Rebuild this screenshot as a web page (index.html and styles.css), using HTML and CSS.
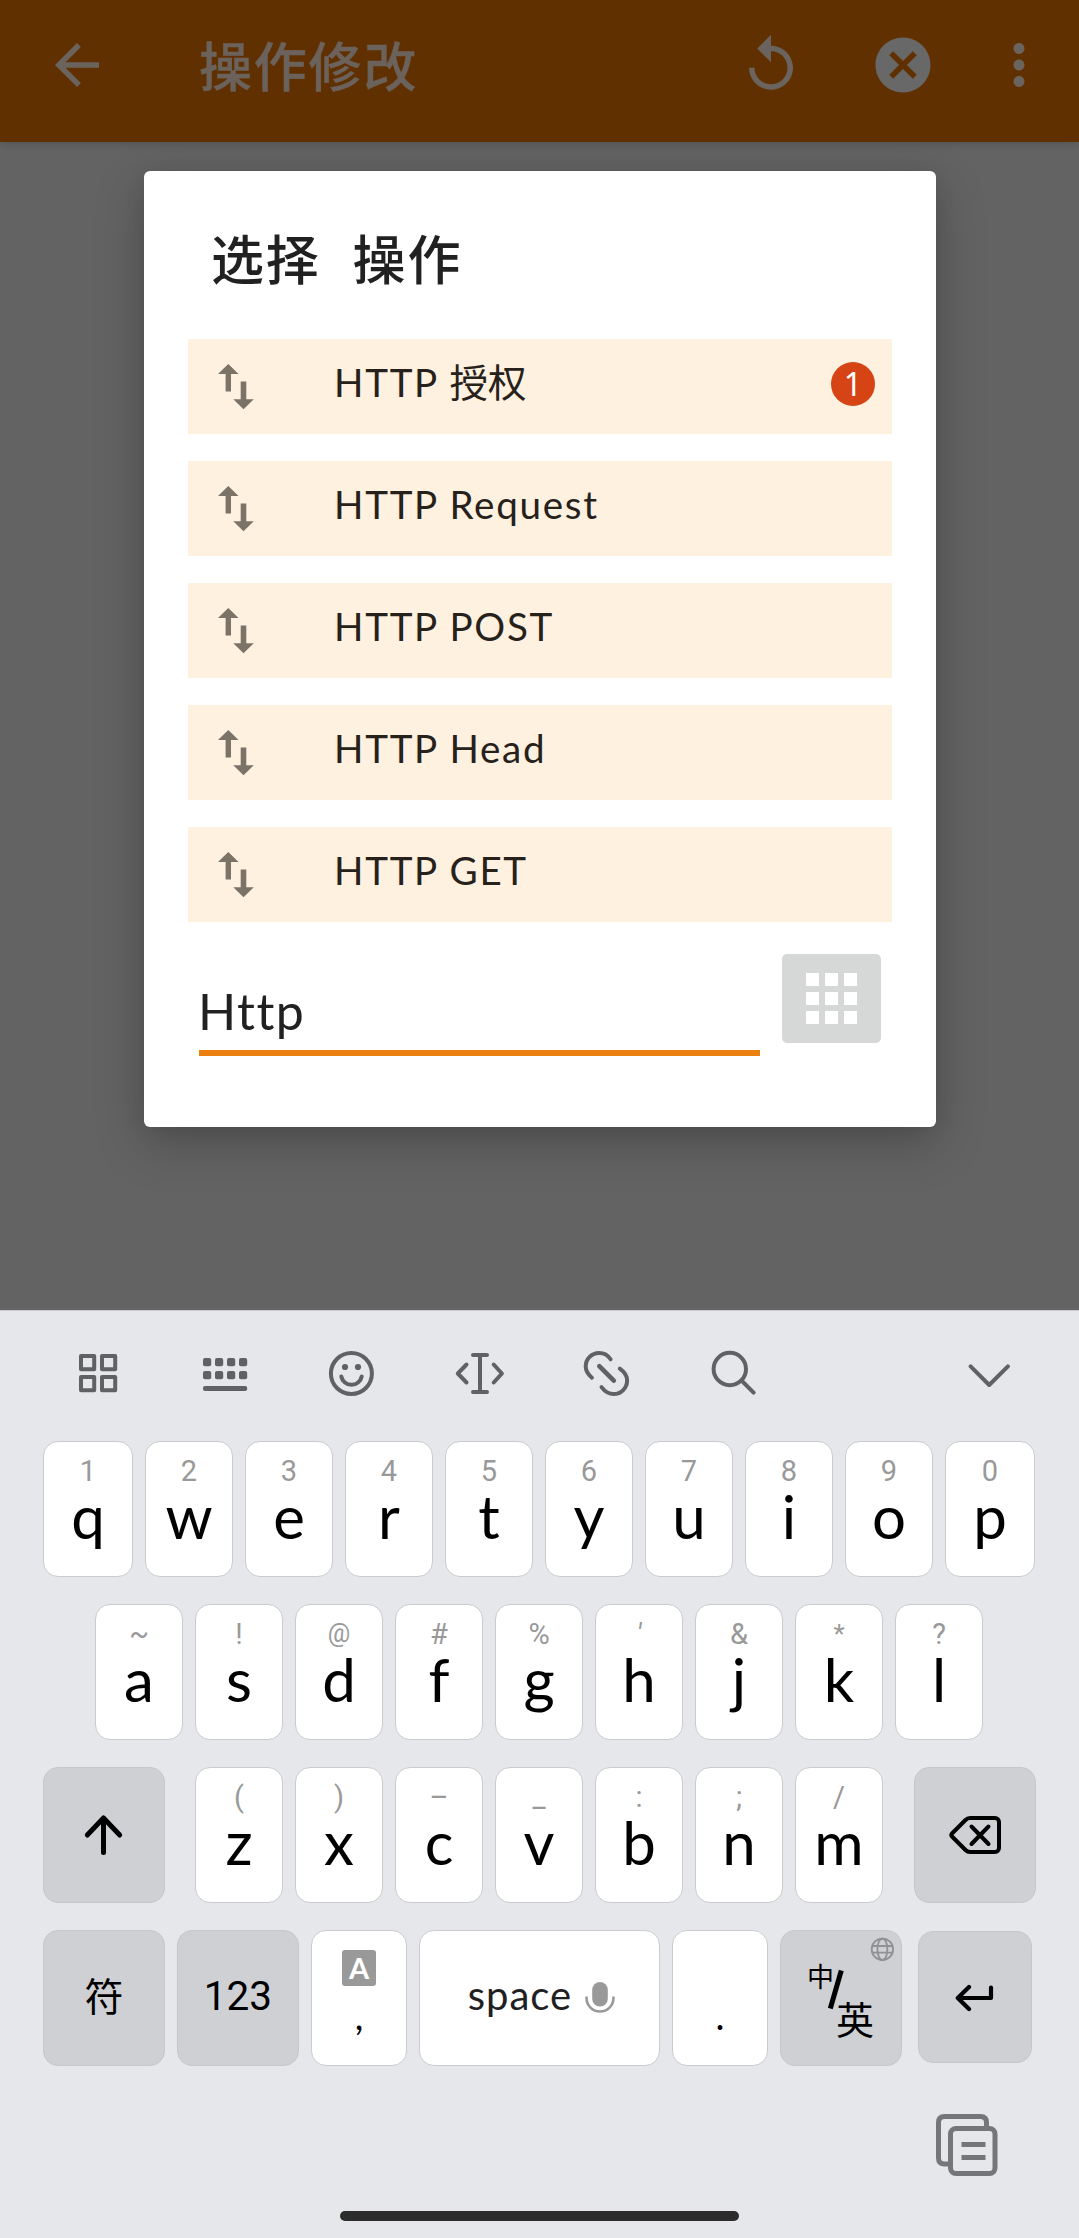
FILE: index.html
```html
<!DOCTYPE html>
<html lang="zh-CN">
<head>
<meta charset="utf-8">
<title>操作修改</title>
<link rel="stylesheet" href="styles.css">
</head>
<body>
<svg class="defs" width="0" height="0">
  <symbol id="updown" viewBox="0 0 36 46"><path d="M10.3 0 20.5 10H13v17.6H7.6V10H0zM22.7 17.6h5.6v17.7h7.5l-10.3 10-10.2-10h7.4z"/></symbol>
</svg>
<header class="appbar">
  <svg class="icon back" viewBox="0 0 24 24"><path d="M20 11H7.83l5.59-5.59L12 4l-8 8 8 8 1.41-1.41L7.83 13H20v-2z"/></svg>
  <h1 class="appbar-title">操作修改</h1>
  <svg class="icon replay" viewBox="0 0 24 24"><path d="M12 5V1L7 6l5 5V7c3.31 0 6 2.69 6 6s-2.69 6-6 6-6-2.69-6-6H4c0 4.42 3.58 8 8 8s8-3.58 8-8-3.58-8-8-8z"/></svg>
  <svg class="icon cancel" viewBox="0 0 24 24"><path d="M12 2C6.47 2 2 6.47 2 12s4.47 10 10 10 10-4.47 10-10S17.53 2 12 2zm5 13.59L15.59 17 12 13.41 8.41 17 7 15.59 10.59 12 7 8.41 8.41 7 12 10.59 15.59 7 17 8.41 13.41 12 17 15.59z"/></svg>
  <svg class="icon more" viewBox="0 0 24 24"><path d="M12 8c1.1 0 2-.9 2-2s-.9-2-2-2-2 .9-2 2 .9 2 2 2zm0 2c-1.1 0-2 .9-2 2s.9 2 2 2 2-.9 2-2-.9-2-2-2zm0 6c-1.1 0-2 .9-2 2s.9 2 2 2 2-.9 2-2-.9-2-2-2z"/></svg>
</header>
<main class="backdrop">
  <section class="dialog">
    <h2 class="dialog-title"><span>选择</span><span>操作</span></h2>
    <ul class="actions">
      <li class="action"><svg class="updown"><use href="#updown"/></svg><span class="label">HTTP <span class="han">授权</span></span><span class="badge">1</span></li>
      <li class="action"><svg class="updown"><use href="#updown"/></svg><span class="label">HTTP Request</span></li>
      <li class="action"><svg class="updown"><use href="#updown"/></svg><span class="label">HTTP POST</span></li>
      <li class="action"><svg class="updown"><use href="#updown"/></svg><span class="label">HTTP Head</span></li>
      <li class="action"><svg class="updown"><use href="#updown"/></svg><span class="label">HTTP GET</span></li>
    </ul>
    <div class="search">
      <div class="field">Http</div>
      <div class="grid-btn"><i></i><i></i><i></i><i></i><i></i><i></i><i></i><i></i><i></i></div>
    </div>
  </section>
</main>
<section class="keyboard">
  <svg class="toolbar" viewBox="0 1311 1079 130" fill="none" stroke="#606165" stroke-width="4" stroke-linecap="round" stroke-linejoin="round">
    <path d="M81 1356h13.2v13.2H81zM102 1356h13.2v13.2H102zM81 1377h13.2v13.2H81zM102 1377h13.2v13.2H102z"/>
    <g fill="#606165" stroke="none">
      <rect x="203" y="1358" width="8.2" height="8.2" rx="2"/><rect x="215" y="1358" width="8.2" height="8.2" rx="2"/><rect x="227" y="1358" width="8.2" height="8.2" rx="2"/><rect x="239" y="1358" width="8.2" height="8.2" rx="2"/>
      <rect x="203" y="1371" width="8.2" height="8.2" rx="2"/><rect x="215" y="1371" width="8.2" height="8.2" rx="2"/><rect x="227" y="1371" width="8.2" height="8.2" rx="2"/><rect x="239" y="1371" width="8.2" height="8.2" rx="2"/>
      <rect x="203" y="1386" width="44.2" height="5" rx="2"/>
      <circle cx="345" cy="1367" r="3.1"/><circle cx="358" cy="1367" r="3.1"/>
    </g>
    <circle cx="351.4" cy="1373.5" r="20.5"/>
    <path d="M341.3 1376.5a10.4 10.4 0 0 0 20.4 0"/>
    <path d="M473 1355h14M473 1392h14M480 1355v37"/>
    <path d="M466.5 1364.5l-8.7 9 8.7 9M493.7 1364.5l8.2 9-8.2 9"/>
    <path d="M610.6 1359.3A13.6 13.6 0 0 0 599 1352.9a13.4 13.6 0 0 0-13.3 13.6c0 4.5 2.3 7.8 6.2 11.2M619.8 1368.7c4.8 3.4 7.3 7 7.3 11.8a13.5 13.6 0 0 1-13.4 13.6c-4.8 0-8.7-2.4-12.2-7"/>
    <path stroke-width="4.6" d="M599.3 1366.2l14.5 14.5"/>
    <circle cx="729.8" cy="1369" r="16.2"/>
    <path d="M742 1381l11.6 11.6M970.6 1366.3l18.6 18.7 18.7-18.7"/>
  </svg>
  <div class="row top">
    <div class="key edge"><small>1</small><b>q</b></div><div class="key"><small>2</small><b>w</b></div><div class="key"><small>3</small><b>e</b></div><div class="key"><small>4</small><b>r</b></div><div class="key"><small>5</small><b>t</b></div><div class="key"><small>6</small><b>y</b></div><div class="key"><small>7</small><b>u</b></div><div class="key"><small>8</small><b>i</b></div><div class="key"><small>9</small><b>o</b></div><div class="key edge"><small>0</small><b>p</b></div>
  </div>
  <div class="row home">
    <div class="key"><small>~</small><b>a</b></div><div class="key"><small>!</small><b>s</b></div><div class="key"><small class="at">@</small><b>d</b></div><div class="key"><small>#</small><b>f</b></div><div class="key"><small>%</small><b>g</b></div><div class="key"><small class="tick">'</small><b>h</b></div><div class="key"><small>&amp;</small><b>j</b></div><div class="key"><small class="star">*</small><b>k</b></div><div class="key"><small>?</small><b>l</b></div>
  </div>
  <div class="row third">
    <div class="key dark shift"><svg width="44" height="48" viewBox="0 0 44 48" fill="none" stroke="#000" stroke-width="5" stroke-linecap="round" stroke-linejoin="round"><path d="M21.5 41.5V7M5.3 24 21.5 7l16.2 17"/></svg></div>
    <div class="key"><small>(</small><b>z</b></div><div class="key"><small>)</small><b>x</b></div><div class="key"><small>–</small><b>c</b></div><div class="key"><small class="low">_</small><b>v</b></div><div class="key"><small>:</small><b>b</b></div><div class="key"><small>;</small><b>n</b></div><div class="key"><small>/</small><b>m</b></div>
    <div class="key dark erase"><svg width="54" height="40" viewBox="0 0 54 40" fill="none" stroke="#000" stroke-width="4" stroke-linecap="round" stroke-linejoin="round"><path d="M22 3h25a4 4 0 0 1 4 4v26a4 4 0 0 1-4 4H22q-2.5 0-4.5-2L4 21.5q-1.5-1.5 0-3L17.5 5q2-2 4.5-2zM23.5 11.5l17 17.5M40.5 11.5l-17 17.5"/></svg></div>
  </div>
  <div class="row bottom">
    <div class="key dark wide"><span class="sym">符</span></div>
    <div class="key dark wide"><span class="num">123</span></div>
    <div class="key punct"><span class="abox">A</span><span class="mark">,</span></div>
    <div class="key space"><span>space</span><svg width="30" height="32" viewBox="0 0 30 32"><rect x="7.2" y="0" width="15.6" height="24.5" rx="7.8" fill="#999"/><path d="M1.5 14.5v1.5a13.5 13.5 0 0 0 27 0v-1.5" fill="none" stroke="#999" stroke-width="2.6"/></svg></div>
    <div class="key punct"><span class="mark dot">.</span></div>
    <div class="key dark lang">
      <span class="zh">中</span><span class="en">英</span>
      <svg class="lang-art" viewBox="780 1930 122 136" fill="none"><path d="M841.3 1970.5l-11 38" stroke="#000" stroke-width="5"/><g stroke="#909194" stroke-width="1.8"><circle cx="882.4" cy="1949.3" r="10.7"/><ellipse cx="882.4" cy="1949.3" rx="5" ry="10.7"/><path d="M873 1946h19M873 1952.6h19"/></g></svg>
    </div>
    <div class="key dark enter"><svg width="40" height="30" viewBox="0 0 40 30" fill="none" stroke="#000" stroke-width="4.2" stroke-linecap="round" stroke-linejoin="round"><path d="M14 5 2.800 16 14 27M2.800 16H36V5.500"/></svg></div>
  </div>
  <svg class="clip" viewBox="0 0 62 62" fill="none" stroke="#757677" stroke-width="5"><rect x="14.5" y="14.5" width="44.5" height="45" rx="5.5"/><path d="M12 50H8.5q-6 0-6-6V8.5q0-6 6-6h36q6 0 6 6V12"/><path d="M25.5 30.5h24M25.5 43.5h24"/></svg>
  <div class="homebar"></div>
</section>
</body>
</html>
```
FILE: styles.css
```css
* { box-sizing: border-box; }
body {
  margin: 0;
  width: 1079px;
  height: 2238px;
  overflow: hidden;
  background: #636363;
  font-family: Lato, "Noto Sans CJK SC", sans-serif;
  font-variant-ligatures: none;
}
.defs { display: block; }
h1, h2, ul { margin: 0; padding: 0; list-style: none; }

.appbar {
  position: relative;
  display: flex;
  align-items: center;
  height: 142px;
  padding: 0 27px 12px 44px;
  background: #613000;
  box-shadow: 0 2px 8px rgba(0, 0, 0, .16);
}
.icon { width: 66px; height: 66px; fill: #6b645e; flex: none; }
.appbar-title {
  flex: 1;
  padding: 4px 0 0 89px;
  font-size: 53px;
  line-height: 64px;
  font-weight: 500;
  letter-spacing: 1.8px;
  color: #6b625c;
  -webkit-text-stroke: .4px #6b625c;
}
.cancel { margin-left: 66px; fill: #686868; }
.more { margin-left: 50px; }

.backdrop { height: 1168px; padding: 29px 143px 0 144px; }
.dialog {
  height: 956px;
  padding: 56px 44px 0;
  border-radius: 6px;
  background: #fff;
  box-shadow: 0 16px 50px rgba(0, 0, 0, .22), 0 4px 20px rgba(0, 0, 0, .08);
}
.dialog-title {
  display: flex;
  gap: 32px;
  padding: 1px 0 0 23px;
  font-size: 53px;
  line-height: 64px;
  font-weight: 500;
  letter-spacing: 1.8px;
  color: #212121;
}
.actions { display: grid; gap: 27px; padding-top: 47px; }
.action {
  display: flex;
  height: 95px;
  padding: 18px 17px 0 30px;
  background: #fff1df;
}
.updown { width: 36px; height: 46px; margin-top: 7px; fill: #7b7268; }
.label {
  flex: 1;
  padding-left: 80px;
  font-size: 38.600px;
  line-height: 50px;
  letter-spacing: 1.700px;
  color: #26211b;
}
.han { letter-spacing: 0; }
.badge {
  width: 44px;
  height: 44px;
  margin-top: 5px;
  border-radius: 50%;
  background: #d64416;
  color: #fff;
  font-family: "Noto Sans", sans-serif;
  font-size: 32px;
  line-height: 43px;
  text-align: center;
}
.search { display: flex; justify-content: space-between; padding: 32px 11px 0; }
.field {
  width: 561px;
  height: 102px;
  padding-top: 25px;
  text-indent: -1px;
  letter-spacing: 1.500px;
  border-bottom: 6px solid #ec8010;
  font-size: 50px;
  line-height: 64px;
  color: #212121;
}
.grid-btn {
  display: grid;
  grid-template-columns: repeat(3, 13.300px);
  grid-template-rows: repeat(3, 13.300px);
  gap: 6px;
  place-content: center;
  width: 99px;
  height: 89px;
  border-radius: 5px;
  background: #d6d8d7;
}
.grid-btn i { background: #fff; }

.keyboard {
  display: flex;
  flex-direction: column;
  height: 928px;
  border-top: 1px solid #cbcace;
  background: #e6e7eb;
}
.toolbar { width: 1079px; height: 130px; flex: none; }
.row { display: flex; gap: 12px; height: 136px; margin: 0 43px 27px; flex: none; }
.home { margin-left: 95px; }
.bottom { margin-bottom: 0; }
.key {
  position: relative;
  display: flex;
  flex-direction: column;
  align-items: center;
  flex: none;
  width: 88px;
  padding-top: 14px;
  border: 1px solid #cacbcf;
  border-radius: 15px;
  background: #fff;
}
.key.edge { width: 90px; }
.key small { font-family: Roboto, sans-serif; font-size: 29px; line-height: 30px; color: #999; }
.key small.at { font-size: 25px; }
.key small.tick { font-style: italic; }
.key small.star { font-size: 26px; }
.key b { font-weight: 400; font-size: 60px; line-height: 60px; color: #000; }
.key.dark {
  width: 122px;
  padding: 0;
  justify-content: center;
  border-color: #c6c7cb;
  background: #cfd0d4;
}
.shift { margin-right: 18px; }
.erase { margin-left: 19px; }
.sym { margin-top: -5px; font-size: 39px; line-height: 50px; }
.num { margin-top: -5px; font-family: Roboto, sans-serif; font-size: 40.500px; line-height: 50px; }
.key.punct { width: 96px; padding-top: 19px; }
.abox {
  width: 34px;
  height: 36px;
  border-radius: 3px;
  background: #999;
  color: #fff;
  font-size: 29px;
  line-height: 35px;
  font-weight: 700;
  text-align: center;
}
.mark { margin-top: 4px; font-size: 38px; line-height: 50px; }
.mark.dot { margin-top: 40px; }
.key.space {
  width: 241px;
  padding: 0 0 0 4px;
  flex-direction: row;
  justify-content: center;
  gap: 13px;
  font-size: 40px;
  line-height: 50px;
  color: #1e2022;
}
.key.space span { margin-top: -6px; letter-spacing: 1px; }
.zh, .en, .lang-art { position: absolute; }
.zh { left: 26px; top: 26px; font-size: 27px; line-height: 40px; }
.en { left: 55px; top: 63px; font-size: 38px; line-height: 50px; }
.lang-art { left: -1px; top: -1px; width: 122px; height: 136px; }
.key.enter { width: 114px; height: 132px; margin: 1px 0 0 4px; }
.clip { width: 62px; height: 62px; margin: 48px 0 0 936px; flex: none; }
.homebar { width: 399px; height: 10px; margin: 35px 0 0 340px; border-radius: 5px; background: #2c2c2c; }
```
